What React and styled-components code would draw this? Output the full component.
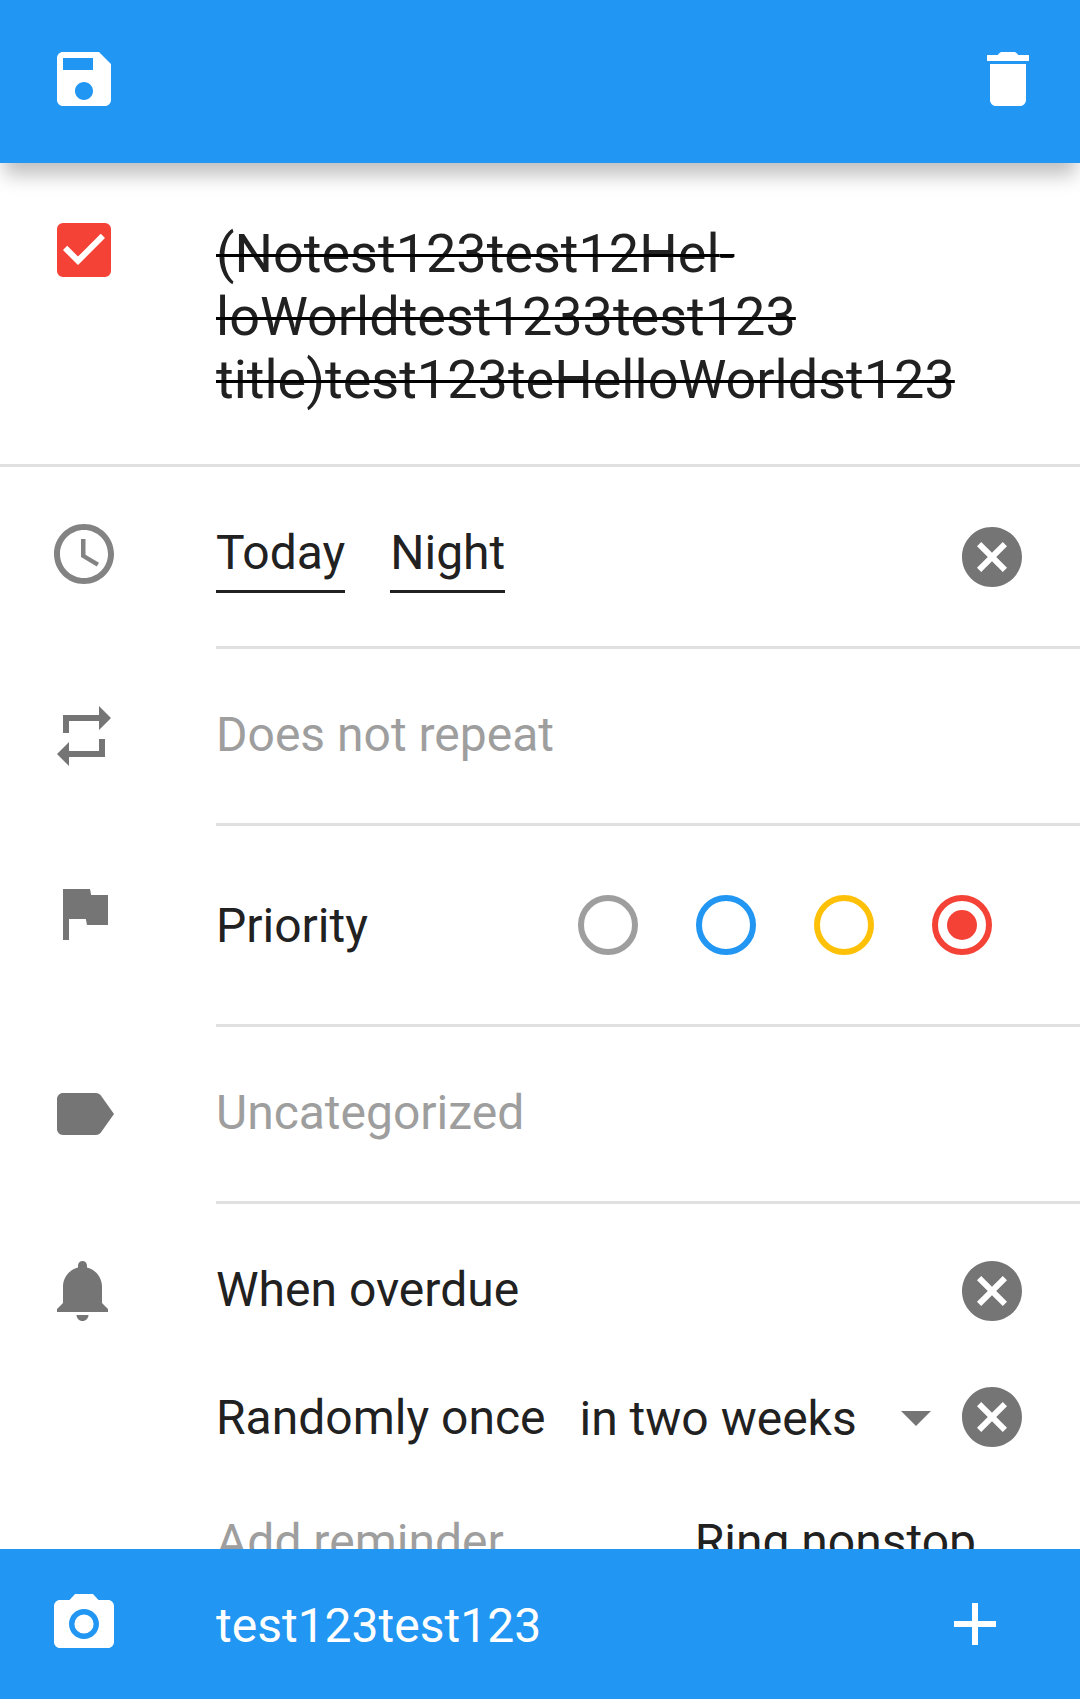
import React, { useState } from "react";
import styled, { createGlobalStyle, css } from "styled-components";

const color = {
  primary: "#2196f3",
  danger: "#f44336",
  amber: "#ffc107",
  text: "#212121",
  hint: "#9e9e9e",
  icon: "#757575",
  line: "#e0e0e0",
};

const GlobalStyle = createGlobalStyle`
  *, *::before, *::after { box-sizing: border-box; }
  body { margin: 0; background: #fff; }
  body, button, input, select {
    font-family: Roboto, "Noto Sans", sans-serif;
    font-size: 48px;
    color: ${color.text};
  }
`;

const Screen = styled.div`
  display: flex;
  flex-direction: column;
  height: 100vh;
`;

const TopBar = styled.header`
  position: relative;
  z-index: 1;
  flex: none;
  display: flex;
  justify-content: space-between;
  padding: 43px 36px 48px 48px;
  background: ${color.primary};
  box-shadow: 0 16px 18px -4px rgba(0, 0, 0, 0.25);
`;

const Content = styled.main`
  flex: 1;
  min-height: 0;
  overflow-y: auto;
  scrollbar-width: none;
`;

const Glyph = styled.svg`
  display: block;
  flex: none;
  width: 72px;
  height: 72px;
  fill: currentColor;
`;

const plainControl = css`
  appearance: none;
  margin: 0;
  padding: 0;
  border: 0;
  border-radius: 0;
  background: none;
  cursor: pointer;
`;

const IconButton = styled.button`
  ${plainControl}
  flex: none;
  color: ${(p) => (p.$light ? "#fff" : color.icon)};
`;

const Row = styled.section`
  display: grid;
  grid-template-columns: 216px 1fr;
  ${(p) => p.$divided && `border-bottom: 3px solid ${color.line};`}
`;

const Leading = styled.div`
  padding: 51px 0 0 48px;
  color: ${color.icon};
`;

const Body = styled.div`
  display: flex;
  align-items: flex-end;
  justify-content: space-between;
  padding: 51px 52px 53px 0;
  ${(p) => !p.$last && `border-bottom: 3px solid ${color.line};`}
`;

const PriorityBody = styled(Body)`
  align-items: center;
  padding: 64px 88px 64px 0;
`;

const Reminders = styled(Body)`
  flex-direction: column;
  align-items: stretch;
  gap: 54px;
`;

const ReminderLine = styled.div`
  display: flex;
  align-items: ${(p) => (p.$center ? "center" : "flex-start")};
  justify-content: space-between;
`;

const TextButton = styled.button`
  ${plainControl}
  line-height: 70px;
  text-align: left;
  white-space: nowrap;
  color: ${(p) => (p.$hint ? color.hint : color.text)};
  ${(p) => p.$underlined && `padding-bottom: 2px; border-bottom: 3px solid ${color.text};`}
`;

const RingButton = styled(TextButton)`
  margin-right: 52px;
`;

const DateTime = styled.div`
  display: flex;
  gap: 45px;
`;

const CheckField = styled.span`
  display: grid;
  place-items: center;
  width: 72px;
  height: 72px;

  > * { grid-area: 1 / 1; }
  svg { color: #fff; pointer-events: none; }
`;

const CheckBox = styled.input`
  ${plainControl}
  width: 54px;
  height: 54px;
  border: 6px solid ${color.danger};
  border-radius: 6px;

  &:checked { background: ${color.danger}; }
`;

const Title = styled.h1`
  margin: 0;
  padding: 59px 52px 53px 0;
  font-size: 54px;
  font-weight: 400;
  line-height: 63px;
  ${(p) =>
    p.$done &&
    `text-decoration: line-through;
     text-decoration-color: #000;
     text-decoration-thickness: 3px;`}
`;

const Label = styled.span`
  padding-top: 2px;
  line-height: 68px;
  white-space: nowrap;
`;

const Choices = styled.div`
  display: flex;
  gap: 58px;
`;

const Radio = styled.input`
  ${plainControl}
  display: grid;
  place-items: center;
  width: 60px;
  height: 60px;
  border: 6px solid ${(p) => p.$tone};
  border-radius: 50%;

  &:checked::before {
    content: "";
    width: 30px;
    height: 30px;
    border-radius: 50%;
    background: ${(p) => p.$tone};
  }
`;

const SelectField = styled.div`
  flex: 1;
  display: grid;
  align-items: center;
  margin: 0 4px 0 34px;

  > * { grid-area: 1 / 1; }
  svg { justify-self: end; color: ${color.icon}; pointer-events: none; }
`;

const Select = styled.select`
  ${plainControl}
  width: 100%;
  height: 72px;
  padding-top: 2px;
`;

const BottomBar = styled.footer`
  flex: none;
  display: grid;
  grid-template-columns: 168px 1fr auto;
  align-items: center;
  padding: 39px 69px 39px 48px;
  background: ${color.primary};
`;

const NoteInput = styled.input`
  ${plainControl}
  width: 100%;
  height: 72px;
  padding-top: 2px;
  color: #fff;
  cursor: text;
`;

const paths = {
  save: "M17 3H5c-1.11 0-2 .9-2 2v14c0 1.1.89 2 2 2h14c1.1 0 2-.9 2-2V7l-4-4zm-5 16c-1.66 0-3-1.34-3-3s1.34-3 3-3 3 1.34 3 3-1.34 3-3 3zm3-10H5V5h10v4z",
  trash: "M6 19c0 1.1.9 2 2 2h8c1.1 0 2-.9 2-2V7H6v12zM19 4h-3.5l-.7-.7q-.3-.3-.7-.3h-4.2q-.4 0-.7.3l-.7.7H5v2h14V4z",
  check: "M10 17l-5-5 1.41-1.41L10 14.17l7.59-7.59L19 8l-9 9z",
  clock:
    "M11.99 2C6.47 2 2 6.48 2 12s4.47 10 9.99 10C17.52 22 22 17.52 22 12S17.52 2 11.99 2zM12 20c-4.42 0-8-3.58-8-8s3.58-8 8-8 8 3.58 8 8-3.58 8-8 8zM12.5 7H11v6l5.25 3.15.75-1.23-4.5-2.67z",
  repeat: "M7 7h10v3l4-4-4-4v3H5v6h2V7zm10 10H7v-3l-4 4 4 4v-3h12v-6h-2v4z",
  flag: "M14.4 6L14 4H5v17h2v-7h5.6l.4 2h7V6z",
  label:
    "M17.63 5.84C17.27 5.33 16.67 5 16 5L5 5.01C3.9 5.01 3 5.9 3 7v10c0 1.1.9 1.99 2 1.99L16 19c.67 0 1.27-.33 1.63-.84L22 12l-4.37-6.16z",
  bell: "M11.5 22c1.1 0 2-.9 2-2h-4c0 1.1.9 2 2 2zm6.5-6v-5.5c0-3.07-2.13-5.64-5-6.32V3.5c0-.83-.67-1.5-1.5-1.5S10 2.67 10 3.5v.68c-2.87.68-5 3.25-5 6.32V16l-2 2v1h17v-1l-2-2z",
  clear:
    "M12 2C6.47 2 2 6.47 2 12s4.47 10 10 10 10-4.47 10-10S17.53 2 12 2zm5 13.59L15.59 17 12 13.41 8.41 17 7 15.59 10.59 12 7 8.41 8.41 7 12 10.59 15.59 7 17 8.41 13.41 12 17 15.59z",
  caret: "M7 10l5 5 5-5z",
  camera:
    "M9 2L7.17 4H4c-1.1 0-2 .9-2 2v12c0 1.1.9 2 2 2h16c1.1 0 2-.9 2-2V6c0-1.1-.9-2-2-2h-3.17L15 2H9zm3 15c-2.76 0-5-2.24-5-5s2.24-5 5-5 5 2.24 5 5-2.24 5-5 5zM12 8.8a3.2 3.2 0 1 0 0 6.4 3.2 3.2 0 1 0 0-6.4z",
  plus: "M19 13h-6v6h-2v-6H5v-2h6V5h2v6h6v2z",
};

const priorities = [
  { name: "None", tone: color.hint },
  { name: "Low", tone: color.primary },
  { name: "Medium", tone: color.amber },
  { name: "High", tone: color.danger },
];

function Icon({ name, opacity }) {
  return (
    <Glyph viewBox="0 0 24 24" aria-hidden="true" fillOpacity={opacity}>
      <path d={paths[name]} />
    </Glyph>
  );
}

function ClearButton({ label }) {
  return (
    <IconButton type="button" aria-label={label}>
      <Icon name="clear" />
    </IconButton>
  );
}

export default function App() {
  const [done, setDone] = useState(true);
  const [priority, setPriority] = useState("High");
  const [note, setNote] = useState("test123test123");

  return (
    <Screen>
      <GlobalStyle />
      <TopBar>
        <IconButton type="button" $light aria-label="Save">
          <Icon name="save" />
        </IconButton>
        <IconButton type="button" $light aria-label="Delete">
          <Icon name="trash" />
        </IconButton>
      </TopBar>

      <Content>
        <Row $divided>
          <Leading>
            <CheckField>
              <CheckBox
                id="done"
                type="checkbox"
                checked={done}
                onChange={(e) => setDone(e.target.checked)}
              />
              <Icon name="check" />
            </CheckField>
          </Leading>
          <Title $done={done}>
            <label htmlFor="done">
              {"(Notest123test12Hel\u00adloWorldtest1233test123 title)test123teHelloWorldst123"}
            </label>
          </Title>
        </Row>

        <Row>
          <Leading>
            <Icon name="clock" opacity={0.9} />
          </Leading>
          <Body>
            <DateTime>
              <TextButton type="button" $underlined>Today</TextButton>
              <TextButton type="button" $underlined>Night</TextButton>
            </DateTime>
            <ClearButton label="Clear due date" />
          </Body>
        </Row>

        <Row>
          <Leading>
            <Icon name="repeat" />
          </Leading>
          <Body>
            <TextButton type="button" $hint>Does not repeat</TextButton>
          </Body>
        </Row>

        <Row>
          <Leading>
            <Icon name="flag" />
          </Leading>
          <PriorityBody>
            <Label id="priority">Priority</Label>
            <Choices role="radiogroup" aria-labelledby="priority">
              {priorities.map(({ name, tone }) => (
                <Radio
                  key={name}
                  type="radio"
                  name="priority"
                  aria-label={name}
                  $tone={tone}
                  checked={priority === name}
                  onChange={() => setPriority(name)}
                />
              ))}
            </Choices>
          </PriorityBody>
        </Row>

        <Row>
          <Leading>
            <Icon name="label" />
          </Leading>
          <Body>
            <TextButton type="button" $hint>Uncategorized</TextButton>
          </Body>
        </Row>

        <Row>
          <Leading>
            <Icon name="bell" />
          </Leading>
          <Reminders $last>
            <ReminderLine>
              <TextButton type="button">When overdue</TextButton>
              <ClearButton label="Remove overdue reminder" />
            </ReminderLine>
            <ReminderLine $center>
              <Label as="label" htmlFor="random">Randomly once</Label>
              <SelectField>
                <Select id="random" defaultValue="weeks2">
                  <option value="weeks2">in two weeks</option>
                </Select>
                <Icon name="caret" />
              </SelectField>
              <ClearButton label="Remove random reminder" />
            </ReminderLine>
            <ReminderLine>
              <TextButton type="button" $hint>Add reminder</TextButton>
              <RingButton type="button">Ring nonstop</RingButton>
            </ReminderLine>
          </Reminders>
        </Row>
      </Content>

      <BottomBar>
        <IconButton type="button" $light aria-label="Take photo">
          <Icon name="camera" />
        </IconButton>
        <NoteInput
          type="text"
          aria-label="Note"
          value={note}
          onChange={(e) => setNote(e.target.value)}
        />
        <IconButton type="button" $light aria-label="Add">
          <Icon name="plus" />
        </IconButton>
      </BottomBar>
    </Screen>
  );
}
